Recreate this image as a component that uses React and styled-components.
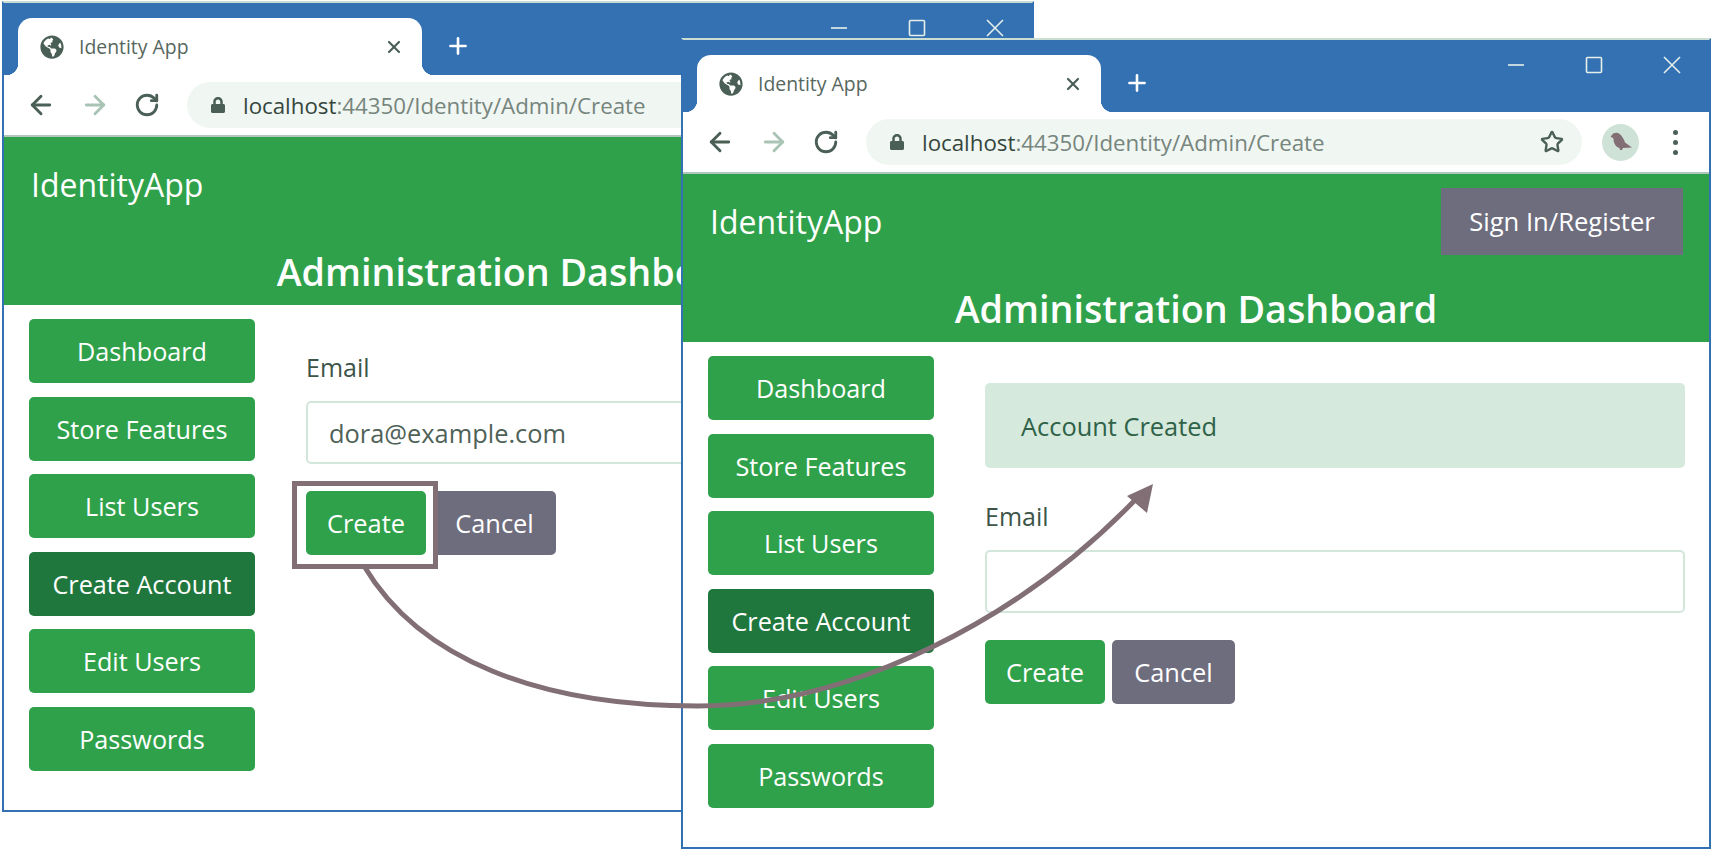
import React from "react";
import styled, { createGlobalStyle } from "styled-components";
import { ArrowLeft, ArrowRight, RotateCw, Star, X, Plus } from "lucide-react";
import { FaGlobeAmericas, FaLock } from "react-icons/fa";

const blue = "#3371b3";
const green = "#30a14b";
const greenDark = "#1f773e";
const slate = "#6e6d7e";
const mauve = "#826f75";
const line = "#d3e6dc";
const ink = "#3c5548";

const GlobalStyle = createGlobalStyle`
    html, body {
        margin: 0;
        height: 100%;
        background: white;
        overflow: hidden;
        font-family: "Open Sans", "Noto Sans", sans-serif;
    }
`;

const Desktop = styled.div`
    position: relative;
    width: 1714px;
    height: 850px;
`;

const Window = styled.div`
    position: absolute;
    left: ${(p) => p.$left}px;
    top: ${(p) => p.$top}px;
    width: ${(p) => p.$width}px;
    height: 811px;
    box-sizing: border-box;
    border: 2px solid ${blue};
    border-top-color: #c9ddd2;
    background: white;
    display: flex;
    flex-direction: column;
    overflow: hidden;
`;

const TabStrip = styled.div`
    height: 72px;
    flex: none;
    background: ${blue};
    display: flex;
    align-items: flex-end;
    padding-left: 14px;
    color: white;
`;

const Tab = styled.div`
    position: relative;
    width: 404px;
    height: 57px;
    box-sizing: border-box;
    padding: 0 18px 0 22px;
    background: white;
    border-radius: 14px 14px 0 0;
    display: flex;
    align-items: center;
    gap: 15px;
    color: #4a5f55;

    &::before,
    &::after {
        content: "";
        position: absolute;
        bottom: 0;
        width: 12px;
        height: 12px;
    }
    &::before {
        left: -12px;
        background: radial-gradient(circle at 0 0, transparent 12px, white 12.5px);
    }
    &::after {
        right: -12px;
        background: radial-gradient(circle at 100% 0, transparent 12px, white 12.5px);
    }
`;

const TabTitle = styled.span`
    flex: 1;
    font-size: 19.4px;
    color: #56675e;
`;

const NewTab = styled.div`
    margin: 0 0 15px 23px;
    height: 28px;
    display: flex;
    align-items: center;
`;

const WindowControls = styled.div`
    margin: 0 0 38px auto;
    padding-right: 28px;
    display: flex;
    align-items: center;
    gap: 60px;
    height: 18px;
`;

const ControlGlyph = styled.svg`
    width: 18px;
    height: 18px;
    fill: none;
    stroke: #e6f0ea;
    stroke-width: 1.6;
`;

const Toolbar = styled.div`
    height: 62px;
    flex: none;
    box-sizing: border-box;
    border-bottom: 2px solid #b4c6bc;
    display: flex;
    align-items: center;
    padding: 0 26px 0 22px;
`;

const NavIcons = styled.div`
    display: flex;
    align-items: center;
    gap: 24px;
    color: #4a5f55;
`;

const Omnibox = styled.div`
    margin-left: 27px;
    width: 716px;
    height: 46px;
    box-sizing: border-box;
    padding: 0 18px 0 23px;
    border-radius: 23px;
    background: #f0f6f2;
    display: flex;
    align-items: center;
    color: #4a5f55;
`;

const Url = styled.span`
    margin-left: 17px;
    flex: 1;
    font-size: 22.3px;
    color: #76857d;
    white-space: nowrap;
    b {
        font-weight: 400;
        color: #34463c;
    }
`;

const Avatar = styled.svg`
    margin-left: 20px;
    width: 37px;
    height: 37px;
    flex: none;
`;

const Dots = styled.div`
    margin-left: 34px;
    display: flex;
    flex-direction: column;
    gap: 5px;
    span {
        width: 5px;
        height: 5px;
        border-radius: 50%;
        background: #4a5f55;
    }
`;

const PageHeader = styled.header`
    height: 168px;
    flex: none;
    background: ${green};
    color: white;
    display: flex;
    flex-direction: column;
`;

const Navbar = styled.div`
    height: 105px;
    box-sizing: border-box;
    padding: 14px 26px 0 27px;
    display: flex;
    justify-content: space-between;
    align-items: flex-start;
`;

const Brand = styled.div`
    font-size: 32px;
    line-height: 67px;
`;

const SignIn = styled.div`
    width: 242px;
    height: 67px;
    background: ${slate};
    font-size: 25.6px;
    display: flex;
    align-items: center;
    justify-content: center;
`;

const Heading = styled.div`
    text-align: center;
    font-size: 37.7px;
    font-weight: 600;
    line-height: 60px;
`;

const PageBody = styled.div`
    flex: 1;
    display: flex;
    padding: 0 24px 0 25px;
`;

const Sidebar = styled.nav`
    width: 226px;
    flex: none;
    padding-top: 14px;
    display: flex;
    flex-direction: column;
    gap: 13.5px;
`;

const NavButton = styled.div`
    height: 64px;
    border-radius: 5px;
    background: ${(p) => (p.$active ? greenDark : green)};
    color: white;
    font-size: 25.2px;
    display: flex;
    align-items: center;
    justify-content: center;
`;

const Content = styled.main`
    flex: 1;
    margin-left: 51px;
    padding-top: 40px;
`;

const Alert = styled.div`
    height: 85px;
    box-sizing: border-box;
    margin: 1px 0 26px;
    padding-left: 36px;
    border-radius: 5px;
    background: #d5e9dd;
    color: #2f6247;
    font-size: 25.4px;
    display: flex;
    align-items: center;
`;

const Label = styled.div`
    height: 44px;
    margin-bottom: 12px;
    font-size: 25px;
    line-height: 44px;
    color: ${ink};
`;

const Input = styled.div`
    height: 63px;
    box-sizing: border-box;
    padding-left: 21px;
    border: 2px solid ${line};
    border-radius: 5px;
    font-size: 25.4px;
    color: #4f6258;
    display: flex;
    align-items: center;
`;

const Actions = styled.div`
    margin-top: 27px;
    display: flex;
    gap: 7px;
`;

const ActionButton = styled.div`
    position: relative;
    height: 64px;
    width: ${(p) => p.$width}px;
    border-radius: 5px;
    background: ${(p) => p.$bg};
    color: white;
    font-size: 25.4px;
    display: flex;
    align-items: center;
    justify-content: center;
`;

const Highlight = styled.div`
    position: absolute;
    z-index: 1;
    inset: -10px -12px -14px -14px;
    border: 5px solid ${mauve};
`;

const Overlay = styled.svg`
    position: absolute;
    left: 0;
    top: 0;
    width: 1714px;
    height: 850px;
    pointer-events: none;
`;

const navItems = ["Dashboard", "Store Features", "List Users", "Create Account", "Edit Users", "Passwords"];

function Browser({ left, top, width, alert, email, highlight }) {
    return (
        <Window $left={left} $top={top} $width={width}>
            <TabStrip>
                <Tab>
                    <FaGlobeAmericas size={24} />
                    <TabTitle>Identity App</TabTitle>
                    <X size={20} strokeWidth={2.6} />
                </Tab>
                <NewTab>
                    <Plus size={26} strokeWidth={2.4} />
                </NewTab>
                <WindowControls>
                    <ControlGlyph viewBox="0 0 18 18"><path d="M1 9h16" /></ControlGlyph>
                    <ControlGlyph viewBox="0 0 18 18"><rect x="1.5" y="1.5" width="15" height="15" rx="1" /></ControlGlyph>
                    <ControlGlyph viewBox="0 0 18 18"><path d="M1 1l16 16M17 1L1 17" /></ControlGlyph>
                </WindowControls>
            </TabStrip>
            <Toolbar>
                <NavIcons>
                    <ArrowLeft size={30} strokeWidth={2.3} />
                    <ArrowRight size={30} strokeWidth={2.3} color="#a9c4b5" />
                    <RotateCw size={26} strokeWidth={2.6} />
                </NavIcons>
                <Omnibox>
                    <FaLock size={16} />
                    <Url><b>localhost</b>:44350/Identity/Admin/Create</Url>
                    <Star size={24} strokeWidth={2.4} />
                </Omnibox>
                <Avatar viewBox="0 0 37 37">
                    <circle cx="18.5" cy="18.5" r="18.5" fill="#cfe2d7" />
                    <path d="M10 11c1-2 5-3 7-1.500 3 2 5 6 6 9l7 5-9 .5-1 2h-2l-.5-2c-4-1-6-5-6-9.500l-3-2z" fill={mauve} />
                </Avatar>
                <Dots><span /><span /><span /></Dots>
            </Toolbar>
            <PageHeader>
                <Navbar>
                    <Brand>IdentityApp</Brand>
                    <SignIn>Sign In/Register</SignIn>
                </Navbar>
                <Heading>Administration Dashboard</Heading>
            </PageHeader>
            <PageBody>
                <Sidebar>
                    {navItems.map((item) => (
                        <NavButton key={item} $active={item === "Create Account"}>{item}</NavButton>
                    ))}
                </Sidebar>
                <Content>
                    {alert && <Alert>{alert}</Alert>}
                    <Label>Email</Label>
                    <Input>{email}</Input>
                    <Actions>
                        <ActionButton $width={120} $bg={green}>
                            Create
                            {highlight && <Highlight />}
                        </ActionButton>
                        <ActionButton $width={123} $bg={slate}>Cancel</ActionButton>
                    </Actions>
                </Content>
            </PageBody>
        </Window>
    );
}

export default function App() {
    return (
        <Desktop>
            <GlobalStyle />
            <Browser left={2} top={1} width={1032} email="dora@example.com" highlight />
            <Browser left={681} top={38} width={1030} alert="Account Created" />
            <Overlay viewBox="0 0 1714 850">
                <path
                    d="M364 566C420 660 540 706 698 706C850 706 1020 620 1137 498"
                    fill="none"
                    stroke={mauve}
                    strokeWidth="5"
                />
                <path d="M1153 484L1127 496L1147 513Z" fill={mauve} />
            </Overlay>
        </Desktop>
    );
}
